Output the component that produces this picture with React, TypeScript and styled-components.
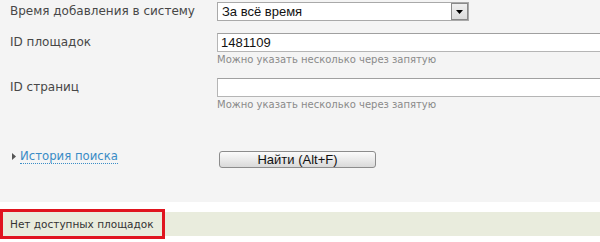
import styled, { createGlobalStyle } from "styled-components";

const GlobalStyle = createGlobalStyle`
    html, body {
        margin: 0;
        padding: 0;
        background: #ffffff;
        overflow: hidden;
    }
`;

const Page = styled.div`
    width: 600px;
    height: 242px;
    overflow: hidden;
    font-family: "DejaVu Sans", Verdana, sans-serif;
`;

const FormPanel = styled.div`
    height: 202px;
    box-sizing: border-box;
    padding-top: 2px;
    background: #f4f4f4;
    display: flex;
    flex-direction: column;
`;

const FieldRow = styled.div<{ $gap: number }>`
    display: grid;
    grid-template-columns: 207px 1fr;
    padding-left: 10px;
    margin-bottom: ${(p) => p.$gap}px;
`;

const Label = styled.div`
    font-size: 12px;
    line-height: 19px;
    color: #474747;
    white-space: nowrap;
`;

const FieldCol = styled.div`
    display: flex;
    flex-direction: column;
    min-width: 0;
`;

const SelectBox = styled.div`
    width: 252px;
    height: 19px;
    box-sizing: border-box;
    border: 1px solid #a9a9a9;
    background: #fff;
    display: flex;
    align-items: stretch;
`;

const SelectValue = styled.div`
    flex: 1;
    padding-left: 4px;
    font-family: "Liberation Sans", Arial, sans-serif;
    font-size: 13px;
    line-height: 17px;
    color: #111;
`;

const SelectArrow = styled.div`
    width: 17px;
    box-sizing: border-box;
    border: 1px solid #8a8a8a;
    background: linear-gradient(#f0f0f0, #dcdcdc);
    display: flex;
    align-items: center;
    justify-content: center;
`;

const TextInput = styled.div`
    width: 383px;
    height: 19px;
    box-sizing: border-box;
    border: 1px solid #b5b5b5;
    border-top-color: #a0a0a0;
    border-right: none;
    background: #fff;
    padding-left: 3px;
    font-family: "Liberation Sans", Arial, sans-serif;
    font-size: 13px;
    line-height: 17px;
    color: #111;
`;

const Hint = styled.div`
    margin-top: 2px;
    font-size: 10px;
    line-height: 12px;
    color: #8a8a8a;
    white-space: nowrap;
`;

const ActionRow = styled.div`
    display: grid;
    grid-template-columns: 207px 1fr;
    padding-left: 12px;
    margin-top: 38px;
`;

const HistoryLink = styled.a`
    display: flex;
    align-items: center;
    gap: 4px;
    height: 15px;
    font-size: 11.7px;
    color: #3a8cc6;
    text-decoration: none;
    white-space: nowrap;

    span {
        border-bottom: 1px dotted #3a8cc6;
        line-height: 14px;
    }
`;

const SearchButton = styled.button`
    width: 157px;
    height: 17px;
    padding: 0;
    border: 1px solid #8c8c8c;
    border-radius: 3px;
    background: linear-gradient(#fbfbfb, #e9e9e9 55%, #d9d9d9);
    font-family: "Liberation Sans", Arial, sans-serif;
    font-size: 13px;
    line-height: 15px;
    color: #111;
`;

const WhiteGap = styled.div`
    height: 10px;
    background: #fff;
`;

const MessageBar = styled.div`
    height: 24px;
    background: #e9ecdd;
    display: flex;
`;

const Message = styled.div`
    margin-left: 3px;
    width: 159px;
    box-sizing: border-box;
    padding-left: 7px;
    font-size: 10.5px;
    line-height: 25px;
    color: #333;
    white-space: nowrap;
    outline: 3px solid #e0151f;
`;

const Dropdown = () => (
    <svg width="7" height="4" viewBox="0 0 7 4">
        <path d="M0 0h7L3.5 4z" fill="#000" />
    </svg>
);

const Caret = () => (
    <svg width="4" height="7" viewBox="0 0 4 7">
        <path d="M0 0l4 3.5L0 7z" fill="#555" />
    </svg>
);

export default function App() {
    return (
        <Page>
            <GlobalStyle />
            <FormPanel>
                <FieldRow $gap={12}>
                    <Label>Время добавления в систему</Label>
                    <FieldCol>
                        <SelectBox>
                            <SelectValue>За всё время</SelectValue>
                            <SelectArrow>
                                <Dropdown />
                            </SelectArrow>
                        </SelectBox>
                    </FieldCol>
                </FieldRow>
                <FieldRow $gap={12}>
                    <Label>ID площадок</Label>
                    <FieldCol>
                        <TextInput>1481109</TextInput>
                        <Hint>Можно указать несколько через запятую</Hint>
                    </FieldCol>
                </FieldRow>
                <FieldRow $gap={0}>
                    <Label>ID страниц</Label>
                    <FieldCol>
                        <TextInput />
                        <Hint>Можно указать несколько через запятую</Hint>
                    </FieldCol>
                </FieldRow>
                <ActionRow>
                    <HistoryLink href="#">
                        <Caret />
                        <span>История поиска</span>
                    </HistoryLink>
                    <div>
                        <SearchButton type="button">Найти (Alt+F)</SearchButton>
                    </div>
                </ActionRow>
            </FormPanel>
            <WhiteGap />
            <MessageBar>
                <Message>Нет доступных площадок</Message>
            </MessageBar>
        </Page>
    );
}
